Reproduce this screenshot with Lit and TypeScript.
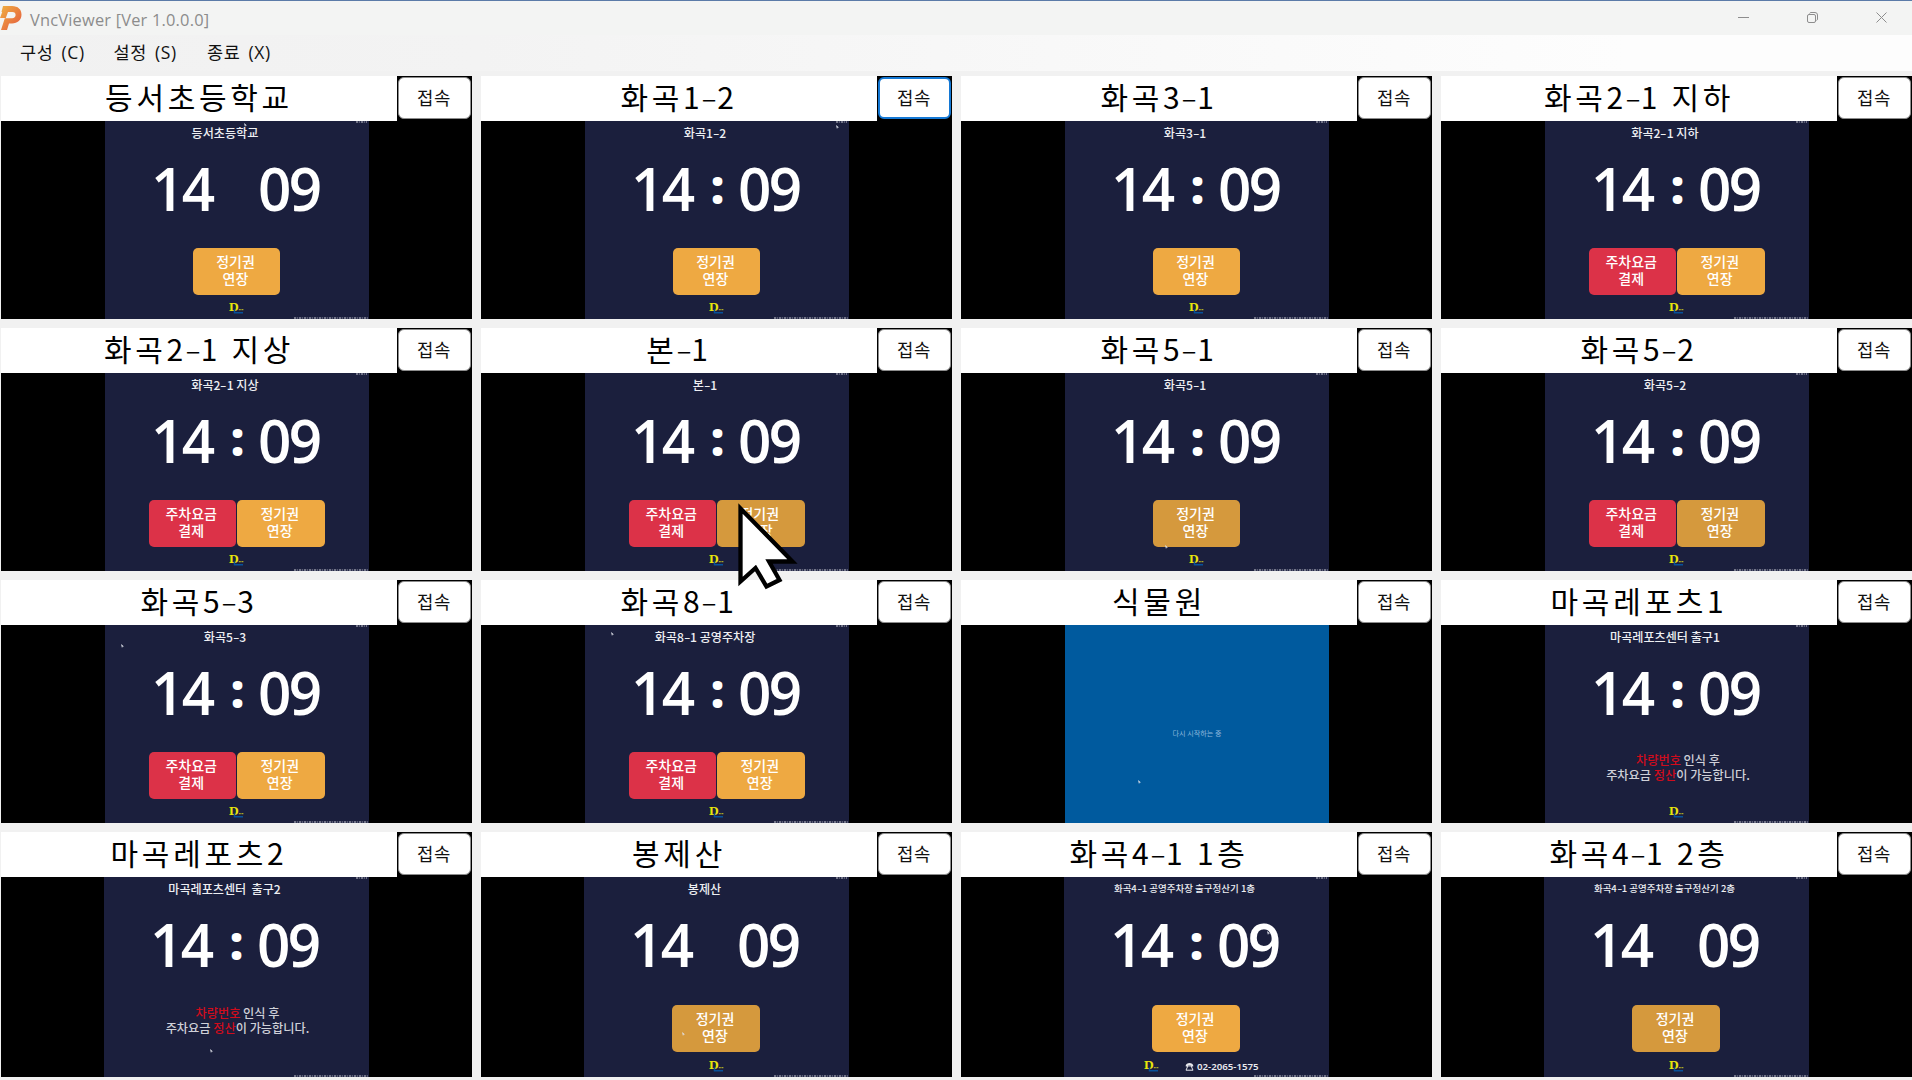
import { LitElement, html, css, nothing } from "lit";
import { customElement, property } from "lit/decorators.js";
import { classMap } from "lit/directives/class-map.js";

interface Station {
  name: string;
  title: string;
  kind: "extend" | "both" | "notice" | "restart";
  blink?: boolean;
  pressed?: boolean;
  focus?: boolean;
  small?: boolean;
  phone?: string;
  noLogo?: boolean;
  pointer?: [number, number];
}

const STATIONS: Station[] = [
  { name: "등서초등학교", title: "등서초등학교", kind: "extend", blink: true, pointer: [139, 2] },
  { name: "화곡1-2", title: "화곡1-2", kind: "extend", focus: true, pointer: [251, 4] },
  { name: "화곡3-1", title: "화곡3-1", kind: "extend" },
  { name: "화곡2-1 지하", title: "화곡2-1 지하", kind: "both" },
  { name: "화곡2-1 지상", title: "화곡2-1 지상", kind: "both" },
  { name: "본-1", title: "본-1", kind: "both", pressed: true },
  { name: "화곡5-1", title: "화곡5-1", kind: "extend", pressed: true, pointer: [100, 172] },
  { name: "화곡5-2", title: "화곡5-2", kind: "both", pressed: true },
  { name: "화곡5-3", title: "화곡5-3", kind: "both", pointer: [16, 19] },
  { name: "화곡8-1", title: "화곡8-1 공영주차장", kind: "both", pointer: [26, 7] },
  { name: "식물원", title: "", kind: "restart", pointer: [73, 155] },
  { name: "마곡레포츠1", title: "마곡레포츠센터 출구1", kind: "notice" },
  { name: "마곡레포츠2", title: "마곡레포츠센터  출구2", kind: "notice", noLogo: true, pointer: [106, 172] },
  { name: "봉제산", title: "봉제산", kind: "extend", blink: true, pressed: true, pointer: [98, 155] },
  { name: "화곡4-1 1층", title: "화곡4-1 공영주차장 출구정산기 1층", kind: "extend", small: true, phone: "02-2065-1575", pointer: [203, 54] },
  { name: "화곡4-1 2층", title: "화곡4-1 공영주차장 출구정산기 2층", kind: "extend", small: true, blink: true, pressed: true },
];

/* Hyphens are drawn wider than the font's own glyph. */
const dashed = (text: string) =>
  text.split("-").map((part, i) => (i ? html`<span class="dash">-</span>${part}` : part));

@customElement("kiosk-screen")
class KioskScreen extends LitElement {
  @property({ attribute: false }) station!: Station;

  static styles = css`
    :host {
      display: block;
      position: relative;
      flex: 1;
      margin: 0 103px 0 104px;
      overflow: hidden;
      background: #1b1f3d;
      color: #fff;
      font-family: "Noto Sans CJK KR", sans-serif;
    }
    :host([tall]) { margin-left: 103px; }
    :host([tall]) .actions { margin-top: 18px; }
    :host([tall]) .notice { margin-top: 19px; }
    .screen { display: flex; flex-direction: column; height: 100%; box-sizing: border-box; }
    .title {
      height: 23px; line-height: 23px; padding-right: 24px; text-align: center;
      font-size: 12.1px; font-weight: 500; white-space: pre; color: #eeeff3;
    }
    .dash { display: inline-block; transform: scaleX(1.5); margin: 0 .08em; }
    .title.small { font-size: 9.5px; }
    .clock {
      display: flex; height: 86px; padding: 1px 0 0 46px; align-items: center;
      font: 600 60.5px/86px "Open Sans", sans-serif; letter-spacing: -2.6px;
    }
    .digits { width: 70px; transform: scaleX(.965); transform-origin: 0 0; }
    .colon { width: 33px; padding-right: 3.5px; text-align: center; font-size: 47px; font-weight: 800; letter-spacing: 0; line-height: 83px; height: 86px; }
    .colon.off { visibility: hidden; }
    .actions { display: flex; justify-content: center; gap: 1px; height: 47px; margin-top: 17px; padding-right: 1px; }
    .action {
      width: 87.5px; height: 47px; border-radius: 5px; box-sizing: border-box; padding: 5px 2px 0 0;
      background: #eea942; font-size: 14px; line-height: 17px; font-weight: 500; text-align: center;
    }
    .pay { background: #dc3248; }
    .pressed { background: #d5993d; }
    .notice { margin-top: 18px; padding-left: 2px; height: 46px; font-size: 12.2px; font-weight: 500; line-height: 14.7px; text-align: center; color: #cfd0d8; }
    .notice em { font-style: normal; color: #d00c1c; }
    .foot { display: flex; justify-content: center; height: 18px; margin: auto 0 3px; padding-right: 1px; }
    .foot.call { justify-content: flex-start; padding-left: 80px; gap: 26px; }
    .foot.gone { visibility: hidden; }
    .phone { display: flex; gap: 3px; align-items: center; height: 21px; font: 600 9.7px/21px "Noto Sans", sans-serif; color: #e8e9ee; }
    .tag, .strip { position: absolute; height: 2px; opacity: .55; background: repeating-linear-gradient(90deg, #b9bac6 0 2px, #3b3f58 2px 3px, #8c8ea0 3px 4px, #2c3050 4px 5px); }
    .tag { right: 2px; top: 0; width: 11px; }
    .strip { right: 1px; bottom: 0; width: 74px; }
    .pointer { position: absolute; width: 3px; height: 4px; overflow: visible; }
    .restart { background: #005a9e; height: 100%; text-align: center; }
    .wait { padding-top: 100px; font-size: 7.1px; line-height: 17px; color: #8db7dc; }
  `;

  private pointer() {
    const p = this.station.pointer;
    return p
      ? html`<svg class="pointer" style="left:${p[0]}px;top:${p[1]}px" viewBox="0 0 3 4"><path d="M0 0 L3 2.4 L1.6 2.6 L1 4Z" fill="#dfe2ea" /></svg>`
      : nothing;
  }

  render() {
    const s = this.station;
    if (s.kind === "restart") {
      return html`<div class="restart"><div class="wait">다시 시작하는 중</div></div>${this.pointer()}`;
    }
    return html`
      <div class="screen">
        <div class=${classMap({ title: true, small: !!s.small })}>${dashed(s.title)}</div>
        <div class="clock">
          <span class="digits">14</span>
          <span class=${classMap({ colon: true, off: !!s.blink })}>:</span>
          <span class="digits">09</span>
        </div>
        ${s.kind === "notice"
          ? html`<div class="notice"><em>차량번호</em> 인식 후<br />주차요금 <em>정산</em>이 가능합니다.</div>`
          : html`<div class="actions">
              ${s.kind === "both" ? html`<div class="action pay">주차요금<br />결제</div>` : nothing}
              <div class=${classMap({ action: true, pressed: !!s.pressed })}>정기권<br />연장</div>
            </div>`}
        <div class=${classMap({ foot: true, call: !!s.phone, gone: !!s.noLogo })}>
          <svg width="15" height="16" viewBox="0 0 15 16">
            <text x="0" y="12.6" font-family="Liberation Serif" font-weight="700" font-size="13.5" fill="#e9e40c">D</text>
            <path d="M5.5 11.5v4M5 14.800h9" stroke="#07509a" stroke-width="1.5" />
            <path d="M9.800 11.600h5" stroke="#a9a528" stroke-width="1.3" stroke-dasharray="2 .6" />
          </svg>
          ${s.phone
            ? html`<div class="phone">
                <svg width="9" height="9" viewBox="0 0 9 9"><path d="M.6 4.3C.9 0 8.1 0 8.4 4.3L6.6 4.8 5.8 3.2H3.2L2.4 4.8Z" fill="#e8e9ee" /><path d="M2.9 3.9h3.2L8 8.2H1z" fill="none" stroke="#e8e9ee" /></svg>
                <span>${s.phone}</span>
              </div>`
            : nothing}
        </div>
      </div>
      <div class="tag"></div>
      <div class="strip"></div>
      ${this.pointer()}
    `;
  }
}

@customElement("station-tile")
class StationTile extends LitElement {
  @property({ attribute: false }) station!: Station;
  @property({ type: Boolean }) tall = false;

  static styles = css`
    :host { display: flex; flex-direction: column; background: #000; min-width: 0; }
    .head { display: flex; height: 45px; }
    .name {
      flex: 1; background: #fff; color: #000; text-align: center; white-space: pre;
      font: 400 30px/41px "Noto Sans CJK KR", sans-serif; letter-spacing: 3.7px;
    }
    .dash { display: inline-block; transform: translateX(1px) scaleX(1.65); letter-spacing: 0; margin-right: 3.7px; font-weight: 300; }
    .cell { width: 75px; box-sizing: border-box; padding: 1px 1px 2px 1px; display: flex; }
    .connect {
      flex: 1; border: 1px solid #8c8c8c; border-radius: 6px; background: #fff; padding: 0 1px 3px 0;
      font: 400 17.8px/24px "Noto Sans CJK KR", sans-serif; letter-spacing: .6px; color: #111;
    }
    .connect.focus { border: 2px solid #1478d4; }
  `;

  render() {
    return html`
      <div class="head">
        <div class="name">${dashed(this.station.name)}</div>
        <div class="cell"><button class=${classMap({ connect: true, focus: !!this.station.focus })}>접속</button></div>
      </div>
      <kiosk-screen .station=${this.station} ?tall=${this.tall}></kiosk-screen>
    `;
  }
}

@customElement("app-root")
class AppRoot extends LitElement {
  static styles = css`
    :host { display: block; width: 1912px; height: 1080px; overflow: hidden; position: relative; background: #f1f1f1; }
    .bar {
      display: flex; align-items: center; height: 35px; box-sizing: border-box; border-top: 1px solid #5b7ba8;
      background: #f3f4f3; font-family: "Open Sans", sans-serif;
    }
    .caption { flex: 1; padding: 2px 0 0 8px; font-size: 16.4px; letter-spacing: .2px; color: #8c8c8c; }
    .controls { display: flex; gap: 58px; padding: 0 25px 2px 0; }
    .menu {
      display: flex; height: 36px; padding-left: 20px; margin-bottom: 5px;
      font: 400 17.5px/35px "Open Sans", "Noto Sans CJK KR", sans-serif; letter-spacing: .7px; word-spacing: 2.6px; color: #111;
      background: linear-gradient(90deg, #f1f1f1 0%, #f3f3f3 25%, #fdfdfd 85%);
    }
    .menu span { width: 93.5px; }
    .grid {
      display: grid; grid-template-columns: repeat(4, 471px); grid-template-rows: 243px 243px 243px 244.5px;
      gap: 9px; padding-left: 1px;
    }
    .cursor { position: absolute; left: 737px; top: 502px; }
  `;

  render() {
    return html`
      <div class="bar">
        <svg width="22" height="26" viewBox="0 0 22 26">
          <defs><linearGradient id="g" x1="0" y1="0" x2="1" y2="1"><stop offset="0" stop-color="#f0b040" /><stop offset="1" stop-color="#e4573f" /></linearGradient></defs>
          <path fill="url(#g)" d="M3 1H12C18 1 21.5 4.5 21.5 9.5C21.5 15 17.5 18.5 12 18.5H9L7 25H1L4.8 13.2H12.2C14.3 13.2 15.6 11.8 15.6 9.9C15.6 8.3 14.6 7 12.4 7H8L5.8 13H0L2.2 7H1.500Z" />
        </svg>
        <div class="caption">VncViewer [Ver 1.0.0.0]</div>
        <div class="controls">
          <svg width="11" height="11" viewBox="0 0 11 11" fill="none" stroke="#8d8d8d"><path d="M0 5.5h11" /></svg>
          <svg width="11" height="11" viewBox="0 0 11 11" fill="none" stroke="#8d8d8d"><rect x=".5" y="2.5" width="8" height="8" rx="1.5" /><path d="M2.5 1.5Q3 .5 4 .5H8Q10.500 .5 10.500 3V7Q10.500 8 9.500 8.500" /></svg>
          <svg width="11" height="11" viewBox="0 0 11 11" fill="none" stroke="#8d8d8d"><path d="M.5.5l10 10M10.500.5l-10 10" /></svg>
        </div>
      </div>
      <div class="menu"><span>구성 (C)</span><span>설정 (S)</span><span>종료 (X)</span></div>
      <div class="grid">
        ${STATIONS.map((s, i) => html`<station-tile .station=${s} .tall=${i >= 12}></station-tile>`)}
      </div>
      <svg class="cursor" width="64" height="92" viewBox="0 0 64 92">
        <path d="M3.500 6.500 V79.500 L18.500 66 L29.500 84.500 L42.500 78 L32 59.500 H55.500 Z" fill="#fff" stroke="#000" stroke-width="4.3" />
      </svg>
    `;
  }
}
